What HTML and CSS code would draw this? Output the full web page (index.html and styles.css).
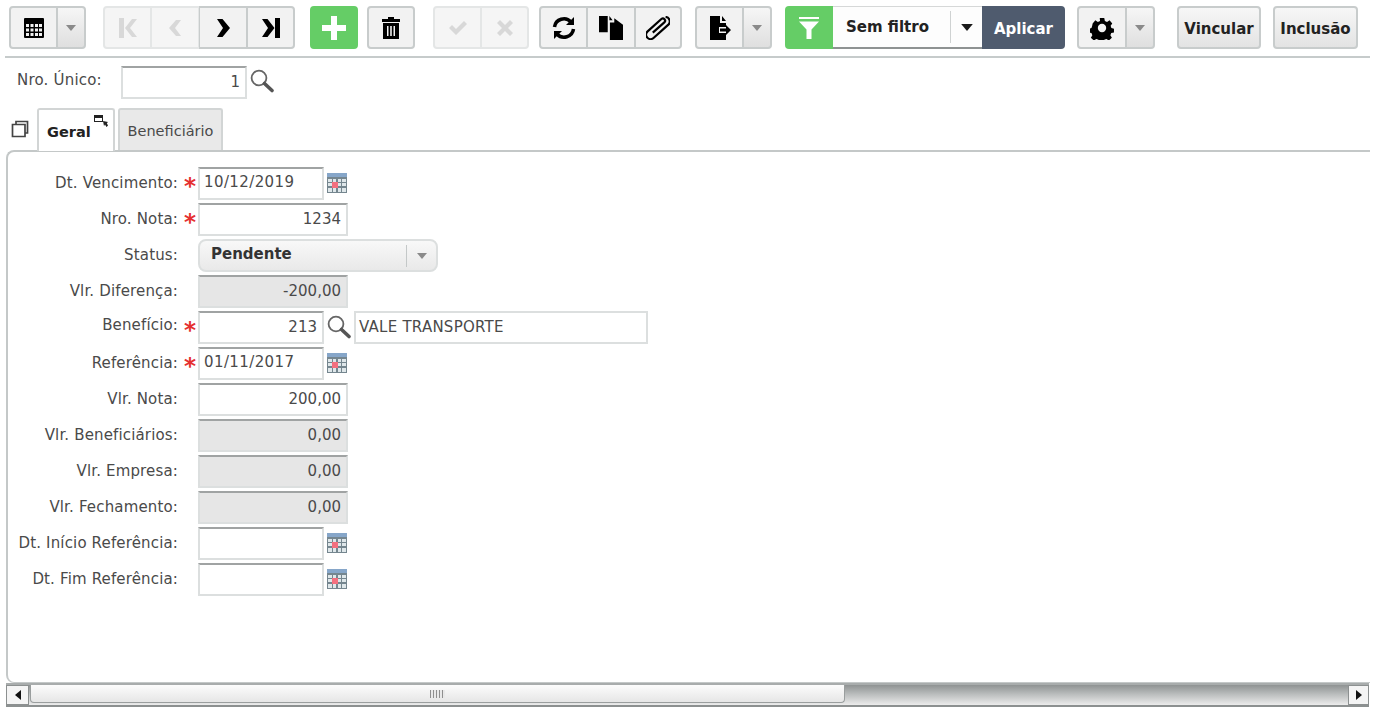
FILE: index.html
```html
<!DOCTYPE html>
<html lang="pt">
<head>
<meta charset="utf-8">
<title>Cadastro</title>
<link rel="stylesheet" href="styles.css">
</head>
<body>
<svg class="defs" width="0" height="0" aria-hidden="true">
  <defs>
    <symbol id="caret" viewBox="0 0 10 6"><path d="M0 0h10L5 6z"/></symbol>
    <symbol id="lens" viewBox="0 0 24 24">
      <circle cx="9" cy="9" r="7.400" fill="#fff" stroke="#666" stroke-width="1.800"/>
      <path d="M14.500 14.500l7.500 7" stroke="#555" stroke-width="3.600" stroke-linecap="round"/>
    </symbol>
    <symbol id="cal" viewBox="0 0 20 20">
      <rect width="20" height="20" fill="#75868f"/>
      <rect width="20" height="4" fill="#86a6c9"/>
      <g fill="#dfe7ea">
        <rect x="1" y="6" width="4" height="3"/><rect x="6" y="6" width="3" height="3"/><rect x="11" y="6" width="3" height="3"/><rect x="15" y="6" width="4" height="3"/>
        <rect x="1" y="10" width="4" height="3"/><rect x="11" y="10" width="3" height="3"/><rect x="15" y="10" width="4" height="3"/>
        <rect x="1" y="15" width="4" height="4"/><rect x="6" y="15" width="3" height="4"/><rect x="11" y="15" width="3" height="4"/><rect x="15" y="15" width="4" height="4"/>
      </g>
      <rect x="5" y="9" width="6" height="6" fill="#f4707f"/>
    </symbol>
  </defs>
</svg>

<div class="toolbar">
  <div class="group split g-grid">
    <button class="btn btn-main"><svg class="ico" viewBox="0 0 20 20"><path d="M1 0h18a1 1 0 0 1 1 1v18a1 1 0 0 1-1 1H1a1 1 0 0 1-1-1V1a1 1 0 0 1 1-1zm1 6v3h3V6zm4.500 0v3h3V6zm4.500 0v3h3V6zm4 0v3h3V6zM2 10.500v3h3v-3zm4.500 0v3h3v-3zm4.500 0v3h3v-3zm4 0v3h3v-3zM2 15v3h3v-3zm4.500 0v3h3v-3zm4.500 0v3h3v-3zm4 0v3h3v-3z" fill-rule="evenodd"/></svg></button>
    <button class="btn btn-caret"><svg class="caret"><use href="#caret"/></svg></button>
  </div>
  <div class="group g-nav">
    <button class="btn off"><svg class="ico" viewBox="0 0 20 20"><path d="M1 0h5v20H1zM7 10l7-9h5l-7 9 7 9h-5z"/></svg></button>
    <button class="btn off"><svg class="ico" viewBox="0 0 20 20"><path d="M11 2h5l-6 8 6 8h-5l-7-8z"/></svg></button>
    <button class="btn"><svg class="ico" viewBox="0 0 20 20"><path d="M4 1h5.500l7.500 9-7.500 9H4l6-9z"/></svg></button>
    <button class="btn"><svg class="ico" viewBox="0 0 20 20"><path d="M14 0h5v20h-5zM1 1h5.500l7 9-7 9H1l6-9z"/></svg></button>
  </div>
  <button class="btn solo green g-add"><svg class="ico big" viewBox="0 0 20 20"><path d="M7.500 0h5v7.500H20v5h-7.500V20h-5v-7.500H0v-5h7.500z" fill="#fff"/></svg></button>
  <button class="btn solo g-del"><svg class="ico tall" viewBox="0 0 20 22"><path d="M7 0h6v2h6v3H1V2h6zM2 6h16v16H2zm4 3v10h1.500V9zm3.200 0v10h1.600V9zm3.300 0v10H14V9z" fill-rule="evenodd"/></svg></button>
  <div class="group g-ok">
    <button class="btn off"><svg class="ico" viewBox="0 0 20 20"><path d="M1 10l3-3 4 4 8-8 3 3-11 11z"/></svg></button>
    <button class="btn off"><svg class="ico" viewBox="0 0 20 20"><path d="M2 5l3-3 5 5 5-5 3 3-5 5 5 5-3 3-5-5-5 5-3-3 5-5z"/></svg></button>
  </div>
  <div class="group g-act">
    <button class="btn"><svg class="ico big" viewBox="0 0 24 24"><path d="M2.500 11A9.500 9.500 0 0 1 19 6M21.500 13A9.500 9.500 0 0 1 5 18" fill="none" stroke="#000" stroke-width="3.500"/><path d="M22 1v8h-8zM2 23v-8h8z"/></svg></button>
    <button class="btn"><svg class="ico big" viewBox="0 0 22 22"><path d="M0 0h8v15H0zM9.500 0l3 4h-3zM10 6h4V2l8 6v14H10z"/></svg></button>
    <button class="btn btn-narrow"><svg class="ico big" viewBox="0 0 24 24"><g transform="rotate(-42 12 12)"><path d="M5 12h15.500a2.200 2.200 0 0 0 0-4.400H2a4.400 4.400 0 0 0 0 8.800h20a4.400 4.400 0 0 0 3-7.500" fill="none" stroke="#000" stroke-width="2.200"/></g></svg></button>
  </div>
  <div class="group split g-exp">
    <button class="btn btn-main"><svg class="ico big" viewBox="0 0 24 24"><path d="M2 0h10v7h6v4h-7v6h7v7H2zM14 0l4 5h-4zM12 12.500h6V9l5 5-5 5v-3.500h-6z"/></svg></button>
    <button class="btn btn-caret"><svg class="caret"><use href="#caret"/></svg></button>
  </div>
  <div class="filter">
    <span class="f-ico"><svg class="ico big" viewBox="0 0 24 24"><path d="M2 1h20v2H2zM2 5.500h20l-7.500 8V23h-5v-9.500z" fill="#fff"/></svg></span>
    <span class="f-sel">
      <span class="f-txt">Sem filtro</span>
      <span class="f-arrow"><svg class="caret dark"><use href="#caret"/></svg></span>
    </span>
    <button class="f-apply">Aplicar</button>
  </div>
  <div class="group split g-gear">
    <button class="btn btn-main"><svg class="ico big" viewBox="0 0 24 24"><path d="M9.500 1h5l.7 3.200 2.400 1 2.800-1.800 3 3.500-1.800 2.600.8 2.500 3 .9-.1 0v4l-3 .7-1 2.500 1.700 2.800-3.400 3-2.700-1.800-2.400 1-.7 3h-5l-.7-3-2.400-1-2.700 1.800-3.400-3 1.700-2.800-1-2.500-3-.7v-4l3-.9.800-2.500L1.600 6.900l3-3.500 2.800 1.800 2.400-1z" transform="translate(1.200 1.200) scale(.9)"/><circle cx="12" cy="12" r="4.200" fill="#f2f2f2"/></svg></button>
    <button class="btn btn-caret"><svg class="caret"><use href="#caret"/></svg></button>
  </div>
  <button class="btn solo txt g-vin">Vincular</button>
  <button class="btn solo txt g-inc">Inclusão</button>
</div>

<div class="keyrow">
  <label class="key-label">Nro. Único:</label>
  <span class="input num w126">1</span>
  <svg class="lens"><use href="#lens"/></svg>
</div>

<div class="tabs">
  <svg class="tabs-ico" viewBox="0 0 18 18"><path d="M5 4V1.500h11.500V13H14M1.500 4.500H14V16.500H1.500z" fill="#fff" stroke="#444" stroke-width="1.700"/></svg>
  <div class="tab active">Geral
    <svg class="tab-pop" viewBox="0 0 14 12"><rect x=".5" y=".5" width="8" height="6" fill="#fff" stroke="#222"/><rect x=".5" y=".5" width="8" height="2.500" fill="#222"/><path d="M9 6l5 1-1.200 1.200L14 10.500 12.500 12 11 9.500 10 11z" fill="#222"/></svg>
  </div>
  <div class="tab">Beneficiário</div>
</div>

<div class="panel">
  <div class="row"><label class="lbl">Dt. Vencimento:</label><span class="req">*</span><span class="input date w126">10/12/2019</span><svg class="cal"><use href="#cal"/></svg></div>
  <div class="row"><label class="lbl">Nro. Nota:</label><span class="req">*</span><span class="input num w150">1234</span></div>
  <div class="row"><label class="lbl">Status:</label><span class="req"></span>
    <span class="combo"><span class="combo-txt">Pendente</span><span class="combo-arrow"><svg class="caret"><use href="#caret"/></svg></span></span>
  </div>
  <div class="row"><label class="lbl">Vlr. Diferença:</label><span class="req"></span><span class="input num w150 ro">-200,00</span></div>
  <div class="row"><label class="lbl lbl-up">Benefício:</label><span class="req">*</span><span class="input num w126">213</span><svg class="lens tight"><use href="#lens"/></svg><span class="input desc">VALE TRANSPORTE</span></div>
  <div class="row"><label class="lbl">Referência:</label><span class="req">*</span><span class="input date w126">01/11/2017</span><svg class="cal"><use href="#cal"/></svg></div>
  <div class="row"><label class="lbl">Vlr. Nota:</label><span class="req"></span><span class="input num w150">200,00</span></div>
  <div class="row"><label class="lbl">Vlr. Beneficiários:</label><span class="req"></span><span class="input num w150 ro">0,00</span></div>
  <div class="row"><label class="lbl">Vlr. Empresa:</label><span class="req"></span><span class="input num w150 ro">0,00</span></div>
  <div class="row"><label class="lbl">Vlr. Fechamento:</label><span class="req"></span><span class="input num w150 ro">0,00</span></div>
  <div class="row"><label class="lbl">Dt. Início Referência:</label><span class="req"></span><span class="input date w126"></span><svg class="cal"><use href="#cal"/></svg></div>
  <div class="row"><label class="lbl">Dt. Fim Referência:</label><span class="req"></span><span class="input date w126"></span><svg class="cal"><use href="#cal"/></svg></div>
</div>

<div class="hscroll">
  <span class="sb-btn"><span class="tri-l"></span></span>
  <span class="sb-track">
    <span class="sb-thumb"><span class="grip"></span></span>
  </span>
  <span class="sb-btn right"><span class="tri-r"></span></span>
</div>
</body>
</html>
```
FILE: styles.css
```css
* { box-sizing: border-box; }
html, body { margin: 0; height: 100%; }
body {
  background: #fff;
  color: #4a4a4a;
  font-family: Verdana, "DejaVu Sans", sans-serif;
  font-size: 15px;
  overflow: hidden;
  width: 1375px;
  height: 712px;
}
.defs { position: absolute; }

/* toolbar */
.toolbar {
  display: flex;
  align-items: flex-start;
  height: 58px;
  margin: 0 5px 0 5px;
  padding: 6px 0 0 4px;
  border-bottom: 2px solid #c6cbcb;
}
.group { display: flex; height: 43px; }
.btn {
  display: flex;
  align-items: center;
  justify-content: center;
  width: 48px;
  height: 43px;
  padding: 0;
  background: #f2f2f2;
  border: 2px solid #c8cccc;
  border-left-width: 1px;
  border-right-width: 1px;
  font: inherit;
  color: #222;
}
.group .btn:first-child { border-left-width: 2px; border-radius: 4px 0 0 4px; }
.group .btn:last-child { border-right-width: 2px; border-radius: 0 4px 4px 0; }
.btn.solo { border-width: 2px; border-radius: 4px; }
.btn.off { background: #f5f5f5; border-color: #e4e6e6; }
.btn.off .ico { fill: #d8d8d8; }
.ico { width: 20px; height: 20px; fill: #000; flex: none; }
.ico.big { width: 24px; height: 24px; }
.ico.tall { width: 20px; height: 22px; }
.btn-narrow { width: 47px; }
.btn-caret {
  width: 29px;
  background: linear-gradient(#f6f6f6, #dfdfdf);
}
.caret { width: 10px; height: 6px; fill: #8a8a8a; display: block; }
.caret.dark { fill: #1a1a1a; width: 12px; height: 7px; }
.green { background: #65cd66; border-color: #65cd66; }

.g-nav { margin-left: 17px; }
.g-add { margin-left: 15px; }
.g-del { margin-left: 9px; }
.g-ok { margin-left: 18px; }
.g-act { margin-left: 10px; }
.g-exp { margin-left: 13px; }
.g-gear { margin-left: 12px; }
.g-gear .btn-main { width: 49px; }

.filter { display: flex; height: 43px; margin-left: 13px; }
.f-ico {
  display: flex;
  align-items: center;
  justify-content: center;
  width: 48px;
  background: #65cd66;
  border-radius: 4px 0 0 4px;
}
.f-sel {
  display: flex;
  align-items: center;
  width: 149px;
  background: #fdfdfd;
  border-top: 1px solid #d6d8d8;
  border-bottom: 2px solid #8e9292;
}
.f-txt {
  width: 117px;
  padding-left: 13px;
  font-weight: bold;
  color: #222;
  white-space: nowrap;
}
.f-arrow {
  display: flex;
  align-items: center;
  justify-content: center;
  width: 32px;
  height: 32px;
  border-left: 1px solid #cfd2d2;
}
.f-apply {
  width: 83px;
  padding: 2px 0 0;
  background: #4f5b6e;
  border: 0;
  border-radius: 0 4px 4px 0;
  color: #fff;
  font: bold 15px Verdana, "DejaVu Sans", sans-serif;
}
.btn.txt {
  padding-top: 2px;
  background: linear-gradient(#f7f7f7, #e3e3e3);
  color: #222;
  font-weight: bold;
  white-space: nowrap;
}
.g-vin { width: 84px; margin-left: 22px; }
.g-inc { width: 85px; margin-left: 12px; }

/* key row */
.keyrow {
  display: flex;
  align-items: flex-start;
  height: 50px;
  padding: 8px 0 0 17px;
}
.key-label { width: 104px; padding-top: 5px; letter-spacing: .2px; white-space: nowrap; }
.lens { width: 24px; height: 24px; margin: 3px 0 0 3px; flex: none; }
.lens.tight { margin: 4px 3px 0 3px; }

/* inputs */
.input {
  display: block;
  height: 33px;
  flex: none;
  padding: 3px 4px 0;
  background: #fff;
  border: 2px solid #dcdfdf;
  border-top-color: #a0a3a3;
  line-height: 20px;
  color: #4a4a4a;
  white-space: nowrap;
}
.date { letter-spacing: .4px; }
.num { text-align: right; padding: 4px 5px 0; }
.w126 { width: 126px; }
.w150 { width: 150px; }
.ro { background: #e6e6e6; }
.desc { width: 294px; padding: 4px 3px 0; letter-spacing: .25px; border-top-color: #dcdfdf; }

/* tabs */
.tabs {
  display: flex;
  align-items: flex-end;
  height: 42px;
  padding-left: 11px;
  position: relative;
  z-index: 1;
  font-size: 14.500px;
}
.tabs-ico { width: 18px; height: 18px; margin: 0 8px 12px 0; }
.tab {
  width: 105px;
  height: 42px;
  margin-left: 3px;
  padding-top: 13px;
  text-align: center;
  background: #e9e9e9;
  border: 2px solid #d2d5d5;
  border-bottom: 0;
  border-radius: 3px 3px 0 0;
  color: #4a4a4a;
}
.tab.active {
  position: relative;
  width: 78px;
  height: 43px;
  margin-left: 0;
  margin-bottom: -1px;
  padding: 14px 22px 0 8px;
  background: #fff;
  font-weight: bold;
  color: #222;
  text-align: left;
}
.tab-pop { position: absolute; top: 5px; right: 5px; width: 14px; height: 12px; }

/* panel */
.panel {
  height: 533px;
  margin: 0 5px 0 6px;
  padding-top: 15px;
  border: 2px solid #c4c8c8;
  border-right: 0;
  border-bottom-width: 1px;
  border-radius: 8px 0 0 8px;
}
.row {
  display: flex;
  align-items: flex-start;
  height: 36px;
}
.lbl {
  width: 170px;
  padding-top: 7px;
  text-align: right;
  white-space: nowrap;
  letter-spacing: .15px;
}
.lbl-up { padding-top: 5px; }
.req {
  width: 20px;
  flex: none;
  padding: 7px 0 0 6px;
  color: #e53030;
  font-size: 23px;
  font-weight: bold;
  line-height: 24px;
}
.cal { width: 20px; height: 20px; margin: 6px 0 0 3px; flex: none; }

/* combo */
.combo {
  display: flex;
  align-items: center;
  width: 240px;
  height: 33px;
  background: linear-gradient(#f8f8f8, #e9e9e9);
  border: 2px solid #dcdfdf;
  border-radius: 8px;
  font-weight: bold;
  color: #333;
}
.combo-txt { width: 206px; padding-left: 11px; padding-bottom: 3px; }
.combo-arrow {
  display: flex;
  align-items: center;
  justify-content: center;
  width: 30px;
  height: 22px;
  border-left: 1px solid #c4c8c8;
}

/* bottom scrollbar */
.hscroll {
  display: flex;
  height: 24px;
  margin: 0 6px;
  background: #fff;
  border-top: 2px solid #a8acac;
  border-bottom: 2px solid #8c9090;
}
.sb-btn {
  display: flex;
  align-items: center;
  justify-content: center;
  width: 23px;
  background: #f4f4f4;
  border: 1px solid #8c9090;
  flex: none;
}
.sb-btn.right { width: 21px; }
.tri-l { border: 5px solid transparent; border-left: 0; border-right: 6px solid #111; }
.tri-r { border: 5px solid transparent; border-right: 0; border-left: 6px solid #111; }
.sb-track {
  flex: 1;
  background: linear-gradient(#8f9393, #b9bcbc 45%, #ececec);
}
.sb-thumb {
  display: flex;
  align-items: center;
  justify-content: center;
  width: 815px;
  height: 18px;
  margin-left: 1px;
  background: linear-gradient(#fcfcfc, #e6e6e6);
  border: 1px solid #9a9e9e;
  border-top: 0;
  border-radius: 0 0 4px 4px;
}
.grip {
  width: 15px;
  height: 8px;
  background: repeating-linear-gradient(90deg, #8f8f8f 0 1px, #e9e9e9 1px 3px);
}
```
